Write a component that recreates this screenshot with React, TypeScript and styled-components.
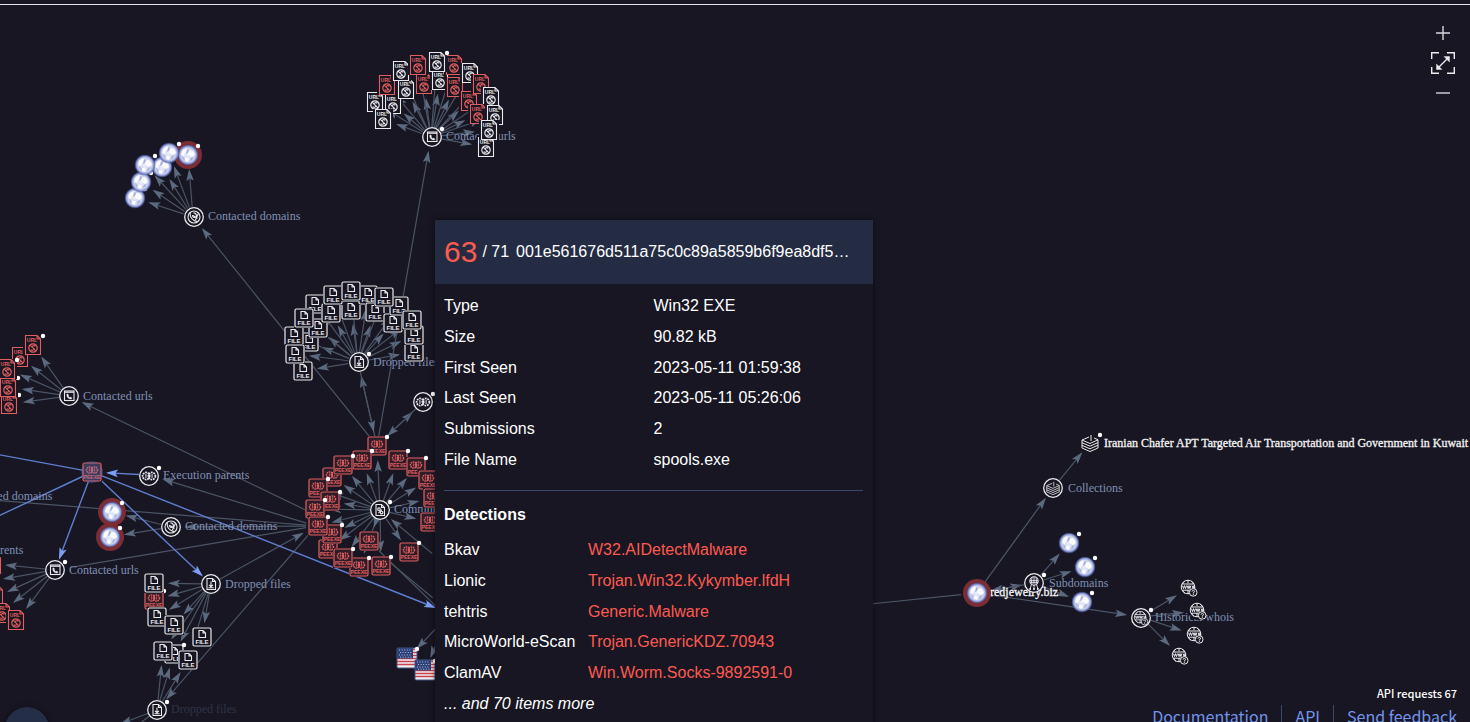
import React from "react";
import styled, { createGlobalStyle } from "styled-components";

const BG = "#171622";
const WHITE = "#e9eaec";
const RED = "#e35f5f";
const EDGE = "#4b5566";
const HEAD = "#5c6a80";
const BLUE = "#5f7fd0";
const BLUE_HEAD = "#7c9ff5";

const GlobalStyle = createGlobalStyle`
  * { box-sizing: border-box; }
  body {
    margin: 0;
    background: ${BG};
    color: #ffffff;
    font-family: "Liberation Sans", Arial, sans-serif;
    overflow: hidden;
  }
`;

const Page = styled.main`
  position: relative;
  display: flex;
  flex-direction: column;
  height: 100vh;
  padding-top: 4px;
  overflow: hidden;
`;

const Rule = styled.div`
  flex: none;
  height: 1px;
  background: #e4e4e8;
`;

const Canvas = styled.svg`
  position: absolute;
  inset: 0;
  width: 100%;
  height: 100%;
  font-family: "Liberation Serif", "Times New Roman", serif;
  font-size: 12px;
`;

const Label = styled.text<{ $tone?: "bright" | "dim" }>`
  fill: ${(p) => (p.$tone === "bright" ? "#f4f4f4" : p.$tone === "dim" ? "#30344a" : "#8090b6")};
  stroke: ${(p) => (p.$tone === "bright" ? "#f4f4f4" : "none")};
  stroke-width: 0.3px;
`;

const Tag = styled.text<{ $size: number }>`
  font-family: "Liberation Sans", Arial, sans-serif;
  font-size: ${(p) => p.$size}px;
  font-weight: 700;
  text-anchor: middle;
`;

const Controls = styled.div`
  position: absolute;
  top: 20px;
  right: 12px;
  display: flex;
  flex-direction: column;
  align-items: center;
  gap: 4px;
`;

const IconButton = styled.button`
  display: block;
  width: 30px;
  height: 26px;
  padding: 0;
  border: 0;
  background: transparent;
  color: #d6d6da;
  cursor: pointer;
  svg { display: block; margin: 0 auto; }
`;

const RoundButton = styled.button`
  position: absolute;
  left: 5px;
  bottom: -29px;
  width: 44px;
  height: 44px;
  padding: 0;
  border: 0;
  border-radius: 50%;
  background: #252e47;
  box-shadow: 0 0 6px rgba(0, 0, 0, 0.4);
  cursor: pointer;
`;

const Card = styled.section`
  position: absolute;
  left: 435px;
  top: 220px;
  width: 438px;
  min-height: 520px;
  background: ${BG};
  box-shadow: 0 0 5px rgba(0, 0, 0, 0.55);
  font-size: 16px;
`;

const CardHeader = styled.header`
  display: flex;
  align-items: center;
  height: 64px;
  padding: 0 9px;
  background: #242c43;
`;

const Score = styled.span`
  color: #ff5a50;
  font-size: 30px;
`;

const Total = styled.span`
  margin-left: 5px;
`;

const Hash = styled.span`
  margin-left: 7px;
  white-space: nowrap;
`;

const CardBody = styled.div`
  padding: 7px 10px 0 9px;
`;

const DataTable = styled.table`
  width: 100%;
  height: 184px;
  border-collapse: collapse;
  line-height: 18px;
  th, td {
    padding: 0;
    text-align: left;
    font-weight: 400;
    white-space: nowrap;
  }
`;

const HalfHead = styled.th`
  width: 50%;
`;

const VendorHead = styled.th`
  width: 144px;
`;

const Verdict = styled.td`
  color: #ff5a50;
`;

const More = styled.td`
  font-style: italic;
`;

const Divider = styled.hr`
  height: 1px;
  margin: 15px 0 0;
  border: 0;
  background: #3b4869;
`;

const Heading = styled.h2`
  margin: 15px 0 11px;
  font-size: 16px;
  line-height: 18px;
`;

const Footer = styled.footer`
  position: absolute;
  right: 13px;
  bottom: -5px;
  display: flex;
  flex-direction: column;
  align-items: flex-end;
  gap: 4px;
  font-family: "Noto Sans CJK SC", sans-serif;
`;

const Requests = styled.div`
  font-size: 11px;
  font-weight: 500;
  line-height: 16px;
`;

const Links = styled.nav`
  display: flex;
  font-size: 16px;
  line-height: 22px;
`;

const FooterLink = styled.a`
  padding: 0 13px;
  color: #7494eb;
  text-decoration: none;
  & + & { border-left: 1px solid #3b4869; }
  &:last-child { padding-right: 0; }
`;

type Pt = [number, number];
type Kind = "url" | "file" | "peexe";
type Hub = "url" | "file" | "domain" | "exe" | "comm" | "stack" | "net" | "whois";

function Edge({ a, b, gap = 14, start = 10, blue, head = true }: {
  a: Pt; b: Pt; gap?: number; start?: number; blue?: boolean; head?: boolean;
}) {
  const dx = b[0] - a[0];
  const dy = b[1] - a[1];
  const d = Math.hypot(dx, dy);
  const deg = (Math.atan2(dy, dx) * 180) / Math.PI;
  const tip = d - gap;
  return (
    <g transform={`translate(${a[0]} ${a[1]}) rotate(${deg})`}>
      <line x1={start} x2={tip - 2} y1="0" y2="0" stroke={blue ? BLUE : EDGE} strokeWidth={blue ? 1.4 : 1.2} />
      {head && (
        <path d={`M${tip} 0l-12 -3.8 2.5 3.8 -2.5 3.8z`} fill={blue ? BLUE_HEAD : HEAD} />
      )}
    </g>
  );
}

function Dot({ at }: { at: Pt }) {
  return <circle cx={at[0]} cy={at[1]} r="2.2" fill="#fff" />;
}

function Chips({ s = 1 }: { s?: number }) {
  return (
    <g transform={`scale(${s})`} fill="none" stroke="currentColor">
      <circle cx="-2.6" cy="0" r="3.2" strokeDasharray="1.6 .7" strokeWidth="1.6" />
      <circle cx="2.6" cy="0" r="3.2" strokeDasharray="1.6 .7" strokeWidth="1.6" />
      <path d="M-2.8 -1.8v3.6M0 -2.4v4.8M2.8 -1.8v3.6" strokeWidth=".9" />
    </g>
  );
}

function Stack() {
  return (
    <g fill="none" stroke="currentColor" strokeWidth="1">
      <path d="M-8 -3L-1 -6M-8 -3L0 0.5L8 -3.2L4 -5M1 -8v6" />
      <path d="M-8 -3v8L0 8.5 8 5v-8.2M-8 -.3L0 3.2 8 -.5M-8 2.4L0 5.8 8 2.2" />
    </g>
  );
}

function Whois() {
  return (
    <g fill="none" stroke="currentColor" strokeWidth="1">
      <circle cx="-1" cy="-1" r="6.8" />
      <path d="M-1 -7.8v3M-1 2v4M-4 -7q-2 1.5-2.4 3M2 -7q2 1.5 2.4 3M-4 5.4q-2-1.6-2.4-3M-7 -4h12M-7 2.2h9" />
      <path d="M-6.5 -2.4l1 3 1-3 1 3 1-3M-1.8 -2.4l.9 3 .9-3 .9 3 .9-3M3.2 -2.4l.9 3 .9-3 .9 3" />
      <circle cx="4.2" cy="4.4" r="3.8" fill={BG} />
      <path d="M3 3.6q.2-1.2 1.4-1.2 1.4.2 1 1.4l-1.1 1.2v.6M4.3 6.1v.9" />
    </g>
  );
}

function Item({ kind, at, red, dot }: { kind: Kind; at: Pt; red?: boolean; dot?: boolean }) {
  const c = red ? RED : WHITE;
  return (
    <g>
      <g transform={`translate(${at[0]} ${at[1]})`} color={c} fill="none" stroke="currentColor">
        <rect x="-10" y="-10" width="20" height="20" fill={BG} stroke="none" />
        {kind === "url" && (
          <>
            <path d="M-7.5 -9.5h11.5l3.5 3.5v15.5h-15zM4 -9.5v3.5h3.5" strokeWidth="1.1" />
            <circle cx="0" cy="3" r="4.2" strokeWidth="1.2" />
            <path d="M-2.8 .2L2.8 5.8M2.4 1.2Q-.2 -.4 -1.4 2.6M-2.4 4.8Q.4 6.2 1.4 3.4" strokeWidth="1.1" />
            <Tag $size={5} x="-1" y="-3" fill={c} stroke="none">URL</Tag>
          </>
        )}
        {kind === "file" && (
          <>
            <rect x="-9" y="-9" width="18" height="18" rx="1.5" strokeWidth="1.2" />
            <path d="M-3 -6.5h4l2.5 2.5v4.5h-6.5zM1 -6.5v2.5h2.5" strokeWidth="1.1" />
            <Tag $size={6} x="0" y="7" fill={c} stroke="none">FILE</Tag>
          </>
        )}
        {kind === "peexe" && (
          <>
            <rect x="-9" y="-9" width="18" height="18" rx="1.5" fill="#2c1d29" strokeWidth="1.2" />
            <g transform="translate(0 -2)"><Chips s={0.95} /></g>
            <Tag $size={5} x="0" y="7" fill={c} stroke="none">PEEXE</Tag>
          </>
        )}
      </g>
      {dot && <Dot at={[at[0] + 10, at[1] - 9]} />}
    </g>
  );
}

function HubNode({ kind, at, dot }: { kind: Hub; at: Pt; dot?: boolean }) {
  return (
    <g>
      <g transform={`translate(${at[0]} ${at[1]})`} color={WHITE} fill="none" stroke="currentColor" strokeWidth="1.1">
        <circle r="9.3" fill={BG} strokeWidth="1.3" />
        {kind === "url" && (
          <>
            <rect x="-4.5" y="-5" width="9.5" height="9.5" />
            <path d="M-4.5 -3.8h9.5" strokeWidth="1.2" />
            <path d="M-2.4 -1.8q-.2 4.6 4.6 5l1-1.2-1.6-1-.9.5-1.4-1.5.4-1-1-1.3z" fill="currentColor" strokeWidth=".2" />
          </>
        )}
        {kind === "file" && (
          <>
            <path d="M-4 -5.5h5.5l3 3v8h-8.5zM1.5 -5.5v3h3" />
            <path d="M0 -2.5v5M-2 .8l2 2 2-2M-2.6 3.8h5.2" />
          </>
        )}
        {kind === "domain" && (
          <>
            <circle r="6" />
            <path d="M-3.6 -4.6q-1 5 3 7.6 2.4 1.6 4 1.4M-.6 -4.2q3 .4 3 2.6t-2.6 2q-1.6-.6-1.4-2.4M-1 -1.6l4.6 3M4.4 -3.6l-3 6.6" />
          </>
        )}
        {kind === "exe" && <Chips s={1.1} />}
        {kind === "comm" && (
          <>
            <path d="M-4 -5.5h5.5l3 3v8h-8.5zM1.5 -5.5v3h3" />
            <circle cx="-1" cy="-.8" r="1.3" />
            <circle cx="1.6" cy="2.6" r="1.3" />
            <path d="M-1.6 3.2l3.4-3.6" />
          </>
        )}
        {kind === "stack" && <g transform="scale(.78)"><Stack /></g>}
        {kind === "net" && (
          <>
            <circle cy="-2" r="4.2" />
            <path d="M-4 -2.4h8M-4 -.6h8M0 -6v7.5M-2 -5.5q-1 3 0 7M2 -5.5q1 3 0 7M-2.5 1.5L-4 6M2.5 1.5L4 6M0 2v4" strokeWidth=".9" />
            <path d="M-4.6 6h1.6M3 6h1.6M-.8 6h1.6" strokeWidth="2" />
          </>
        )}
        {kind === "whois" && <g transform="scale(.85)"><Whois /></g>}
      </g>
      {dot && <Dot at={[at[0] + 10, at[1] - 8]} />}
    </g>
  );
}

function Globe({ at, red, dot }: { at: Pt; red?: boolean; dot?: boolean }) {
  return (
    <g>
      <g transform={`translate(${at[0]} ${at[1]})`}>
        {red && <circle r="14" fill="#7d2c33" />}
        <circle r="10.5" fill="url(#globe)" />
        <path d="M-6 -4q3-4 6-2l-1 3-2 1-1 3-3-1zM2 -5q4 0 5 5l-3 2-3-2-2-2zM-3 3q3-1 4 1l-1 3-3-1z" fill="#fff" opacity=".9" />
        <path d="M-1 -6l2 1-1 3-2 1zM-6 1l2 2 1 2-2-1zM3 3l2-1-1 3-2 1z" fill="#96a1d0" opacity=".8" />
      </g>
      {dot && <Dot at={[at[0] + 10, at[1] - 9]} />}
    </g>
  );
}

function Flag({ at }: { at: Pt }) {
  return (
    <g>
      <g transform={`translate(${at[0]} ${at[1]})`}>
        <rect x="-10" y="-10" width="20" height="20" rx="1" fill="#f1eef0" />
        <path d="M-10 -8.5h20M-10 -5.5h20M-10 -2.5h20M-10 .5h20M-10 3.5h20M-10 6.5h20" stroke="#c8434d" strokeWidth="1.6" />
        <rect x="-10" y="-10" width="16" height="10.5" fill="#2b3f78" />
        <path d="M-8 -8h13M-7 -5.5h12M-8 -3h13M-7 -.8h12" stroke="#c9d0e4" strokeWidth=".9" strokeDasharray="1 1.6" />
        <rect x="-10" y="-10" width="20" height="20" rx="1" fill="none" stroke="#3f5484" />
      </g>
      <Dot at={[at[0] + 10, at[1] - 9]} />
    </g>
  );
}

type Entry = { at: Pt; red?: boolean; dot?: boolean };
const w = (x: number, y: number, dot = false): Entry => ({ at: [x, y], dot });
const r = (x: number, y: number, dot = false): Entry => ({ at: [x, y], red: true, dot });

const topUrls = [
  w(393, 104), w(375, 102), w(383, 119), r(387, 85), r(424, 84), w(406, 89), w(401, 71, true),
  r(418, 65), w(440, 80), r(455, 87), r(454, 65), w(437, 62, true), r(469, 101), w(470, 73),
  r(481, 84), w(491, 97), r(478, 114), w(495, 115), w(486, 147), w(489, 130),
];
const files = [
  w(309, 342), w(318, 328), w(315, 304), w(303, 371), w(294, 336), w(295, 354), w(304, 318),
  w(331, 313), w(351, 310), w(333, 295), w(368, 295), w(375, 312), w(351, 291), w(393, 323),
  w(399, 306), w(384, 297), w(414, 352), w(414, 335), w(412, 320),
];
const peexe = [
  r(332, 477), r(377, 446, true), r(362, 460, true), r(343, 465, true), r(318, 488, true),
  r(398, 460, true), r(416, 467, true), r(428, 480), r(433, 498), r(430, 522), r(330, 501, true),
  r(315, 509, true), r(328, 549), r(332, 534, true), r(318, 526, true), r(359, 567, true),
  r(343, 558, true), r(381, 566, true), r(369, 541), r(409, 552, true),
];
const leftUrls = [r(20, 357), r(33, 345, true), r(9, 404, true), r(8, 387, true), r(7, 369, true)];
const lowFiles = [w(154, 583), w(174, 654, true), w(157, 617), w(174, 625), w(202, 637), w(163, 651), w(188, 660)];
const domains = [w(135, 198, true), w(141, 182, true), w(162, 167), w(145, 165, true), r(188, 155, true), w(169, 153, true)];
const subdomains = [w(1069, 543, true), w(1085, 567, true), w(1082, 602, true)];
const whois: Pt[] = [[1189, 588], [1198, 611], [1195, 635], [1180, 656]];

const Fan = ({ from, items }: { from: Pt; items: Entry[] }) => (
  <>{items.map((i, k) => <Edge key={k} a={from} b={i.at} />)}</>
);
const Group = ({ kind, items }: { kind: Kind; items: Entry[] }) => (
  <>{items.map((i, k) => <Item key={k} kind={kind} {...i} />)}</>
);

const labels: { x: number; y: number; text: string; tone?: "bright" | "dim" }[] = [
  { x: 446, y: 140, text: "Contacted urls" },
  { x: 208, y: 220, text: "Contacted domains" },
  { x: 373, y: 366, text: "Dropped files" },
  { x: 83, y: 400, text: "Contacted urls" },
  { x: 163, y: 479, text: "Execution parents" },
  { x: -40, y: 500, text: "Contacted domains" },
  { x: -63, y: 554, text: "Execution parents" },
  { x: 69, y: 574, text: "Contacted urls" },
  { x: 185, y: 530, text: "Contacted domains" },
  { x: 225, y: 588, text: "Dropped files" },
  { x: 171, y: 713, text: "Dropped files", tone: "dim" },
  { x: 394, y: 513, text: "Communicating files" },
  { x: 1068, y: 492, text: "Collections" },
  { x: 1049, y: 587, text: "Subdomains" },
  { x: 1155, y: 621, text: "Historical whois" },
  { x: 990, y: 596, text: "redjewelry.biz", tone: "bright" },
  { x: 1104, y: 447, text: "Iranian Chafer APT Targeted Air Transportation and Government in Kuwait and", tone: "bright" },
];

const core: Pt = [316, 526];
const parent: Pt = [92, 472];

const Graph = () => (
  <Canvas role="img" aria-label="Relationship graph">
    <defs>
      <radialGradient id="globe">
        <stop offset="0" stopColor="#eceffb" />
        <stop offset=".68" stopColor="#c8cfeb" />
        <stop offset=".84" stopColor="#8290cf" />
        <stop offset="1" stopColor="#35438a" stopOpacity=".4" />
      </radialGradient>
    </defs>

    <Fan from={[431, 137]} items={topUrls} />
    <Fan from={[193, 217]} items={domains} />
    <Fan from={[358, 362]} items={files} />
    <Fan from={[380, 510]} items={peexe} />
    <Fan from={[69, 396]} items={leftUrls} />
    <Fan from={[211, 584]} items={[...lowFiles, r(154, 600)]} />
    <Fan from={[157, 710]} items={lowFiles.filter((f) => f.at[1] > 650)} />
    <Fan from={[1034, 583]} items={subdomains} />
    {whois.map((p, k) => <Edge key={k} a={[1141, 617]} b={p} />)}

    <Edge a={[377, 446]} b={[431, 137]} />
    <Edge a={[377, 446]} b={[193, 217]} />
    <Edge a={[377, 446]} b={[358, 362]} />
    <Edge a={[358, 362]} b={[377, 446]} />
    <Edge a={[377, 446]} b={[423, 402]} />
    <Edge a={[423, 402]} b={[377, 446]} />

    <Edge a={[318, 516]} b={[69, 396]} />
    <Edge a={core} b={[149, 475]} />
    <Edge a={core} b={[-20, 499]} head={false} />
    <Edge a={core} b={[171, 527]} />
    <Edge a={core} b={[55, 570]} head={false} />
    <Edge a={[211, 584]} b={core} />
    <Edge a={core} b={[157, 710]} />
    <Edge a={[171, 527]} b={[112, 512]} />
    <Edge a={[171, 527]} b={[110, 537]} />
    <Edge a={[440, 560]} b={[380, 510]} />
    <Edge a={[381, 555]} b={[445, 608]} head={false} />
    <Edge a={[369, 541]} b={[448, 618]} head={false} />
    <Edge a={[445, 619]} b={[407, 659]} start={0} />
    <Edge a={[446, 620]} b={[425, 671]} start={0} />
    <Edge a={[157, 710]} b={[120, 724]} gap={0} />
    <Edge a={[157, 710]} b={[125, 735]} gap={0} />
    {([[5, 565], [3, 579], [7, 592], [13, 603], [26, 609]] as Pt[]).map((p, k) => (
      <Edge key={k} a={[55, 570]} b={p} gap={0} />
    ))}

    <Edge a={parent} b={[-10, 453]} gap={0} blue head={false} />
    <Edge a={parent} b={[-10, 520]} gap={0} blue head={false} />
    <Edge a={parent} b={[55, 570]} gap={11} blue />
    <Edge a={parent} b={[211, 584]} gap={11} blue />
    <Edge a={parent} b={[436, 608]} gap={0} blue />
    <Edge a={[149, 475]} b={parent} blue />

    <Edge a={[860, 605]} b={[977, 593]} head={false} />
    <Edge a={[977, 593]} b={[1053, 488]} gap={12} />
    <Edge a={[1053, 488]} b={[1090, 443]} gap={12} />
    <Edge a={[977, 593]} b={[1034, 583]} gap={12} />
    <Edge a={[1034, 583]} b={[977, 593]} />
    <Edge a={[977, 593]} b={[1141, 617]} />

    {labels.map((l, k) => <Label key={k} x={l.x} y={l.y} $tone={l.tone}>{l.text}</Label>)}

    {domains.map((d, k) => <Globe key={k} {...d} />)}
    <Globe at={[110, 537]} red dot />
    <Globe at={[112, 512]} red dot />
    <Globe at={[977, 593]} red />
    {subdomains.map((d, k) => <Globe key={k} {...d} />)}

    <HubNode kind="url" at={[432, 137]} dot />
    <HubNode kind="domain" at={[194, 217]} />
    <HubNode kind="file" at={[359, 362]} dot />
    <HubNode kind="exe" at={[423, 402]} dot />
    <HubNode kind="url" at={[69, 396]} />
    <HubNode kind="exe" at={[149, 476]} dot />
    <HubNode kind="domain" at={[171, 527]} />
    <HubNode kind="url" at={[55, 570]} dot />
    <HubNode kind="file" at={[211, 584]} />
    <HubNode kind="file" at={[157, 710]} dot />
    <HubNode kind="comm" at={[380, 510]} dot />
    <HubNode kind="stack" at={[1053, 488]} />
    <HubNode kind="net" at={[1034, 583]} dot />
    <HubNode kind="whois" at={[1141, 618]} dot />

    <Group kind="url" items={topUrls} />
    <Group kind="file" items={files} />
    <Group kind="peexe" items={peexe} />
    <Group kind="url" items={leftUrls} />
    <Group kind="url" items={[r(-7, 564), r(-5, 596), r(2, 613), r(16, 620)]} />
    <Item kind="peexe" at={[154, 600]} red dot />
    <Group kind="file" items={lowFiles} />
    <Item kind="peexe" at={[92, 472]} red />
    <circle cx="92" cy="472" r="11" fill="#6f8be0" opacity=".28" />
    <Flag at={[407, 658]} />
    <Flag at={[425, 670]} />

    <g transform="translate(1090 443)" color={WHITE}><Stack /></g>
    <Dot at={[1100, 435]} />
    {whois.map((p, k) => (
      <g key={k} transform={`translate(${p[0]} ${p[1]})`} color={WHITE}>
        <circle r="9" fill={BG} />
        <Whois />
      </g>
    ))}
  </Canvas>
);

const details = [
  ["Type", "Win32 EXE"],
  ["Size", "90.82 kB"],
  ["First Seen", "2023-05-11 01:59:38"],
  ["Last Seen", "2023-05-11 05:26:06"],
  ["Submissions", "2"],
  ["File Name", "spools.exe"],
];

const detections = [
  ["Bkav", "W32.AIDetectMalware"],
  ["Lionic", "Trojan.Win32.Kykymber.lfdH"],
  ["tehtris", "Generic.Malware"],
  ["MicroWorld-eScan", "Trojan.GenericKDZ.70943"],
  ["ClamAV", "Win.Worm.Socks-9892591-0"],
];

export default function App() {
  return (
    <Page>
      <GlobalStyle />
      <Rule />
      <Graph />
      <Controls>
        <IconButton type="button" aria-label="Zoom in">
          <svg width="14" height="14" viewBox="0 0 14 14" stroke="currentColor" strokeWidth="1.4"><path d="M7 0v14M0 7h14" /></svg>
        </IconButton>
        <IconButton type="button" aria-label="Fit to screen">
          <svg width="24" height="24" viewBox="0 0 24 24" fill="none" stroke="#ececee" strokeWidth="1.4">
            <path d="M.7 8V1.7H8M16 1.7h7.3V8M23.3 16v6.3H16M8 22.3H.7V16M6 18L18 6" />
            <path d="M13 5.5h5.5V11zM5.5 13v5.5H11z" fill="#ececee" strokeWidth=".4" />
          </svg>
        </IconButton>
        <IconButton type="button" aria-label="Zoom out">
          <svg width="14" height="14" viewBox="0 0 14 14" stroke="currentColor" strokeWidth="1.4"><path d="M0 7h14" /></svg>
        </IconButton>
      </Controls>
      <RoundButton type="button" aria-label="Open menu" />
      <Footer>
        <Requests>API requests 67</Requests>
        <Links>
          <FooterLink href="#documentation">Documentation</FooterLink>
          <FooterLink href="#api">API</FooterLink>
          <FooterLink href="#feedback">Send feedback</FooterLink>
        </Links>
      </Footer>
      <Card>
        <CardHeader>
          <Score>63</Score>
          <Total>/ 71</Total>
          <Hash>001e561676d511a75c0c89a5859b6f9ea8df5…</Hash>
        </CardHeader>
        <CardBody>
          <DataTable>
            <tbody>
              {details.map(([k, v]) => (
                <tr key={k}><HalfHead scope="row">{k}</HalfHead><td>{v}</td></tr>
              ))}
            </tbody>
          </DataTable>
          <Divider />
          <Heading>Detections</Heading>
          <DataTable>
            <tbody>
              {detections.map(([k, v]) => (
                <tr key={k}><VendorHead scope="row">{k}</VendorHead><Verdict>{v}</Verdict></tr>
              ))}
              <tr><More colSpan={2}>... and 70 items more</More></tr>
            </tbody>
          </DataTable>
        </CardBody>
      </Card>
    </Page>
  );
}
